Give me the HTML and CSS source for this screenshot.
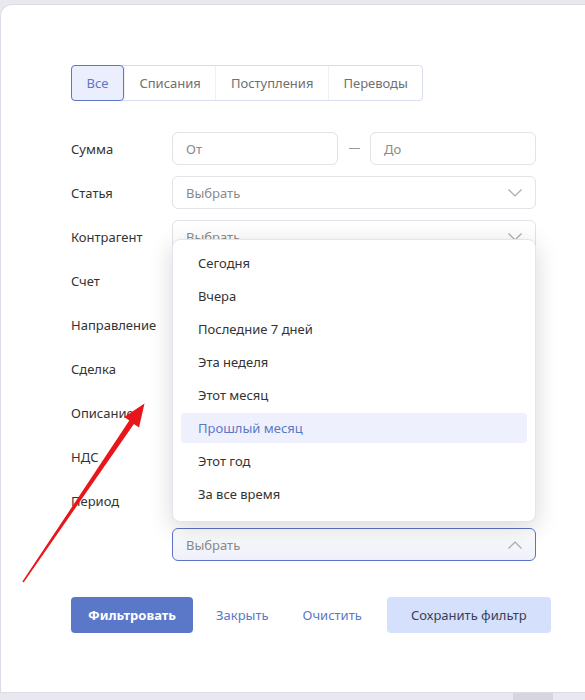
FILE: index.html
```html
<!DOCTYPE html>
<html lang="ru">
<head>
<meta charset="utf-8">
<title>Фильтр</title>
<link rel="stylesheet" href="styles.css">
</head>
<body>
<div class="card">
  <div class="tabs">
    <div class="tab active">Все</div>
    <div class="tab">Списания</div>
    <div class="tab">Поступления</div>
    <div class="tab">Переводы</div>
  </div>

  <div class="form">
    <div class="label">Сумма</div>
    <div class="range">
      <div class="field">От</div>
      <span class="dash"></span>
      <div class="field">До</div>
    </div>

    <div class="label">Статья</div>
    <div class="field select">Выбрать<svg class="chev" viewBox="0 0 14 8"><path d="M0.5 0.5L7 7L13.5 0.5"/></svg></div>

    <div class="label">Контрагент</div>
    <div class="field select">Выбрать<svg class="chev" viewBox="0 0 14 8"><path d="M0.5 0.5L7 7L13.5 0.5"/></svg></div>

    <div class="label">Счет</div>
    <div class="field under"></div>

    <div class="label">Направление</div>
    <div class="field under"></div>

    <div class="label">Сделка</div>
    <div class="field under"></div>

    <div class="label">Описание</div>
    <div class="field under"></div>

    <div class="label">НДС</div>
    <div class="field under"></div>

    <div class="label">Период</div>
    <div class="field under"></div>

    <div class="label"></div>
    <div class="field select open">Выбрать<svg class="chev" viewBox="0 0 14 8"><path d="M0.5 7.5L7 1L13.5 7.5"/></svg></div>
  </div>

  <div class="actions">
    <button class="btn primary">Фильтровать</button>
    <a class="link">Закрыть</a>
    <a class="link second">Очистить</a>
    <button class="btn secondary">Сохранить фильтр</button>
  </div>

  <ul class="menu">
    <li>Сегодня</li>
    <li>Вчера</li>
    <li>Последние 7 дней</li>
    <li>Эта неделя</li>
    <li>Этот месяц</li>
    <li class="hover">Прошлый месяц</li>
    <li>Этот год</li>
    <li>За все время</li>
  </ul>
</div>

<svg class="arrow" viewBox="0 0 585 700" width="585" height="700">
  <polygon points="22.4,581.6 129.3,420.6 124.2,417 144.5,403.5 139,427.6 133.9,424 23.6,582.4"/>
</svg>
<div class="scroll"></div>
</body>
</html>
```

FILE: styles.css
```css
html, body {
  margin: 0;
  padding: 0;
}
body {
  width: 585px;
  height: 700px;
  overflow: hidden;
  background: #e8e8ee;
  font-family: "Noto Sans", "Open Sans", sans-serif;
  font-size: 13px;
  color: #333;
  position: relative;
}
.card {
  position: relative;
  margin-top: 4px;
  width: 640px;
  height: 689px;
  background: #fff;
  border: 1px solid #dcdce6;
  border-right: none;
  border-radius: 12px 0 0 0;
  box-sizing: border-box;
  padding: 60px 0 0 70px;
}
.tabs {
  display: inline-flex;
  border: 1px solid #d8ddf0;
  border-radius: 4px;
  height: 36px;
  box-sizing: border-box;
}
.tab {
  display: flex;
  align-items: center;
  padding: 0 14.5px;
  color: #707070;
  border-left: 1px solid #eef0f6;
}
.tab:first-child {
  border-left: none;
}
.tab.active {
  margin: -1px 0 -1px -1px;
  border: 1px solid #5b78c8;
  border-radius: 4px;
  background: #eaeefd;
  color: #5b78c8;
}
.form {
  margin-top: 31px;
  display: grid;
  grid-template-columns: 101px 364px;
  grid-auto-rows: 33px;
  row-gap: 11px;
  align-items: center;
}
.label {
  color: #333;
}
.range {
  display: flex;
  align-items: center;
}
.range .field {
  width: 166px;
}
.dash {
  width: 32px;
  display: flex;
  justify-content: center;
}
.dash::before {
  content: "";
  width: 11px;
  height: 1px;
  background: #999;
}
.field {
  height: 33px;
  box-sizing: border-box;
  border: 1px solid #e2e2e8;
  border-radius: 6px;
  display: flex;
  align-items: center;
  padding: 0 13px;
  color: #8a8a8a;
}
.field.under {
  border-color: transparent;
}
.select {
  justify-content: space-between;
}
.chev {
  width: 14px;
  height: 8px;
  fill: none;
  stroke: #a8a8b2;
  stroke-width: 1.2;
}
.field.open {
  border-color: #5b74c6;
  background: linear-gradient(#ffffff, #eef0fa);
}
.actions {
  margin-top: 36px;
  display: flex;
  align-items: center;
  gap: 23px;
}
.btn {
  font: inherit;
  height: 36px;
  border: none;
  border-radius: 4px;
  padding: 0;
}
.primary {
  width: 122px;
  background: #5b78c8;
  color: #fff;
  font-weight: 700;
}
.secondary {
  width: 164px;
  margin-left: 2px;
  background: #d5e0fc;
  color: #3a3f55;
}
.link {
  color: #5b78c8;
}
.link.second {
  margin-left: 11px;
}
.menu {
  position: absolute;
  left: 171px;
  top: 234px;
  width: 364px;
  margin: 0;
  padding: 8px 8px 12px;
  box-sizing: border-box;
  list-style: none;
  background: #fff;
  border: 1px solid #e4e4ec;
  border-radius: 8px;
  box-shadow: 0 6px 24px rgba(0, 0, 0, 0.16);
  display: flex;
  flex-direction: column;
  gap: 3px;
}
.menu li {
  height: 30px;
  display: flex;
  align-items: center;
  padding-left: 17px;
  border-radius: 4px;
  color: #333;
}
.menu li.hover {
  background: #eef1fd;
  color: #5b78c8;
}
.arrow {
  position: absolute;
  left: 0;
  top: 0;
  pointer-events: none;
}
.arrow polygon {
  fill: #e8161b;
}
.scroll {
  position: absolute;
  left: 513px;
  top: 693px;
  width: 40px;
  height: 7px;
  background: #d6d6dc;
}
```
